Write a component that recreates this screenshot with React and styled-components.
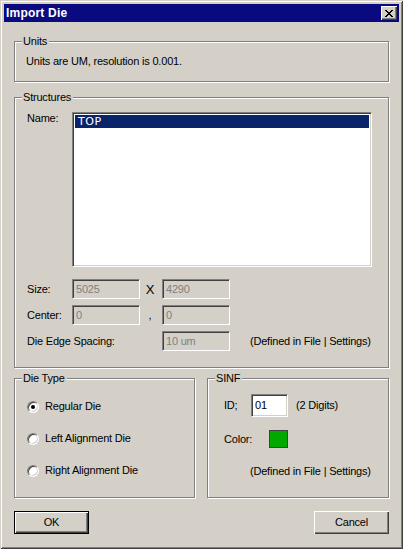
import React from 'react'
import styled, { createGlobalStyle } from 'styled-components'

const Global = createGlobalStyle`
  html, body { margin: 0; padding: 0; background: #d4d0c8; }
  * { box-sizing: border-box; }
`

const FONT = `"Liberation Sans", Arial, sans-serif`

const Window = styled.div`
  width: 403px;
  height: 549px;
  background: #d4d0c8;
  padding: 4px;
  display: flex;
  flex-direction: column;
  font-family: ${FONT};
  font-size: 11px;
  letter-spacing: -0.2px;
  color: #000;
  box-shadow: inset 1px 1px 0 #d4d0c8, inset -1px -1px 0 #404040,
    inset 2px 2px 0 #ffffff, inset -2px -2px 0 #808080;
`

const TitleBar = styled.div`
  height: 18px;
  background: #0a0a80;
  display: flex;
  align-items: center;
  justify-content: space-between;
  padding: 0 2px 0 2px;
`

const Title = styled.span`
  color: #fff;
  font-weight: bold;
  font-size: 12px;
  letter-spacing: 0.2px;
`

const CloseBtn = styled.div`
  width: 16px;
  height: 14px;
  background: #d4d0c8;
  display: flex;
  align-items: center;
  justify-content: center;
  box-shadow: inset 1px 1px 0 #fff, inset -1px -1px 0 #404040,
    inset -2px -2px 0 #808080;
`

const Body = styled.div`
  flex: 1;
  padding: 19px 10px 0 10px;
  display: flex;
  flex-direction: column;
`

const Group = styled.div`
  position: relative;
  border: 1px solid #808080;
  box-shadow: inset 1px 1px 0 #fff, 1px 1px 0 #fff;
  height: ${p => p.$h}px;
  width: ${p => (p.$w ? `${p.$w}px` : 'auto')};
  margin-top: ${p => p.$mt || 0}px;
`

const Legend = styled.span`
  position: absolute;
  top: -7px;
  left: 7px;
  padding: 0 2px 0 1px;
  background: #d4d0c8;
  line-height: 13px;
`

const UnitsText = styled.div`
  padding: 13px 0 0 11px;
  line-height: 13px;
`

const StructGrid = styled.div`
  display: grid;
  grid-template-columns: 45px 68px 22px 68px 142px;
  grid-template-rows: 161px 20px 20px 20px;
  row-gap: 6px;
  padding: 14px 16px 0 12px;
`

const Label = styled.div`
  line-height: 13px;
  align-self: ${p => p.$top ? 'start' : 'center'};
  grid-column: ${p => p.$span || 'auto'};
  color: #000;
`

const Sep = styled.div`
  text-align: center;
  align-self: center;
  line-height: 13px;
  font-size: ${p => p.$size || 11}px;
  padding-right: 2px;
`

const ListBox = styled.div`
  grid-column: 2 / 6;
  margin-bottom: 6px;
  background: #fff;
  border: 1px solid;
  border-color: #808080 #fff #fff #808080;
  box-shadow: inset 1px 1px 0 #404040, inset -1px -1px 0 #d4d0c8;
  padding: 2px 2px;
`

const ListItem = styled.div`
  height: 13px;
  background: ${p => p.$selected ? '#0a246a' : 'transparent'};
  color: ${p => p.$selected ? '#fff' : '#000'};
  font-family: "DejaVu Sans", sans-serif;
  font-size: 11px;
  line-height: 13px;
  padding-left: 3px;
  letter-spacing: 0.5px;
`

const Field = styled.div`
  height: ${p => p.$h || 20}px;
  width: ${p => (p.$w ? `${p.$w}px` : 'auto')};
  background: ${p => p.$disabled ? '#d4d0c8' : '#fff'};
  color: ${p => p.$disabled ? '#808080' : '#000'};
  border: 1px solid;
  border-color: #808080 #fff #fff #808080;
  box-shadow: inset 1px 1px 0 #404040, inset -1px -1px 0 #d4d0c8;
  padding: 0 3px;
  display: flex;
  align-items: center;
  line-height: 13px;
  grid-column: ${p => p.$col || 'auto'};
`

const Note = styled.div`
  align-self: center;
  line-height: 13px;
  padding-left: ${p => p.$pl || 0}px;
  white-space: nowrap;
`

const Row = styled.div`
  display: flex;
  gap: 12px;
  margin-top: 10px;
`

const RadioList = styled.div`
  display: flex;
  flex-direction: column;
  gap: 19px;
  padding: 21px 0 0 12px;
`

const RadioRow = styled.div`
  display: flex;
  align-items: center;
  gap: 6px;
  height: 13px;
  line-height: 13px;
`

const Radio = styled.div`
  width: 12px;
  height: 12px;
  border-radius: 50%;
  background: #fff;
  border: 1px solid;
  border-color: #808080 #fff #fff #808080;
  box-shadow: inset 1px 1px 0 #404040, inset -1px -1px 0 #d4d0c8;
  display: flex;
  align-items: center;
  justify-content: center;
  &::after {
    content: '';
    width: 4px;
    height: 4px;
    border-radius: 50%;
    background: ${p => p.$checked ? '#000' : 'transparent'};
  }
`

const SinfBody = styled.div`
  display: flex;
  flex-direction: column;
  padding: 15px 0 0 16px;
`

const SinfRow = styled.div`
  display: flex;
  align-items: center;
  margin-top: ${p => p.$mt || 0}px;
`

const SinfLabel = styled.div`
  width: ${p => p.$w}px;
  line-height: 13px;
`

const Swatch = styled.div`
  width: 19px;
  height: 18px;
  background: #00a800;
  border: 1px solid #404040;
`

const Buttons = styled.div`
  display: flex;
  justify-content: space-between;
  margin-top: 13px;
`

const Button = styled.div`
  width: 75px;
  height: 23px;
  display: flex;
  align-items: center;
  justify-content: center;
  background: #d4d0c8;
  line-height: 13px;
  ${p => p.$default
    ? `border: 1px solid #000;
       box-shadow: inset 1px 1px 0 #fff, inset -1px -1px 0 #404040, inset -2px -2px 0 #808080;`
    : `box-shadow: inset 1px 1px 0 #fff, inset -1px -1px 0 #404040, inset -2px -2px 0 #808080;`}
`

export default function App() {
  return (
    <>
      <Global />
      <Window>
        <TitleBar>
          <Title>Import Die</Title>
          <CloseBtn>
            <svg width="8" height="7" viewBox="0 0 8 7" shapeRendering="crispEdges">
              <path d="M0 0h2v1h-2zM6 0h2v1h-2zM1 1h2v1h-2zM5 1h2v1h-2zM2 2h4v1h-4zM3 3h2v1h-2zM2 4h4v1h-4zM1 5h2v1h-2zM5 5h2v1h-2zM0 6h2v1h-2zM6 6h2v1h-2z" fill="#000" />
            </svg>
          </CloseBtn>
        </TitleBar>
        <Body>
          <Group $h={41}>
            <Legend>Units</Legend>
            <UnitsText>Units are UM, resolution is 0.001.</UnitsText>
          </Group>

          <Group $h={271} $mt={15}>
            <Legend>Structures</Legend>
            <StructGrid>
              <Label $top>Name:</Label>
              <ListBox>
                <ListItem $selected>TOP</ListItem>
              </ListBox>

              <Label>Size:</Label>
              <Field $disabled>5025</Field>
              <Sep $size={13}>X</Sep>
              <Field $disabled>4290</Field>
              <div />

              <Label>Center:</Label>
              <Field $disabled>0</Field>
              <Sep>,</Sep>
              <Field $disabled>0</Field>
              <div />

              <Label $span="1 / 4">Die Edge Spacing:</Label>
              <Field $disabled>10 um</Field>
              <Note $pl={20}>(Defined in File | Settings)</Note>
            </StructGrid>
          </Group>

          <Row>
            <Group $h={120} $w={181}>
              <Legend>Die Type</Legend>
              <RadioList>
                <RadioRow><Radio $checked />Regular Die</RadioRow>
                <RadioRow><Radio />Left Alignment Die</RadioRow>
                <RadioRow><Radio />Right Alignment Die</RadioRow>
              </RadioList>
            </Group>
            <Group $h={120} $w={182}>
              <Legend>SINF</Legend>
              <SinfBody>
                <SinfRow>
                  <SinfLabel $w={27}>ID;</SinfLabel>
                  <Field $w={37} $h={23}>01</Field>
                  <Note $pl={8}>(2 Digits)</Note>
                </SinfRow>
                <SinfRow $mt={13}>
                  <SinfLabel $w={45}>Color:</SinfLabel>
                  <Swatch />
                </SinfRow>
                <SinfRow $mt={17}>
                  <Note $pl={26}>(Defined in File | Settings)</Note>
                </SinfRow>
              </SinfBody>
            </Group>
          </Row>

          <Buttons>
            <Button $default>OK</Button>
            <Button>Cancel</Button>
          </Buttons>
        </Body>
      </Window>
    </>
  )
}
